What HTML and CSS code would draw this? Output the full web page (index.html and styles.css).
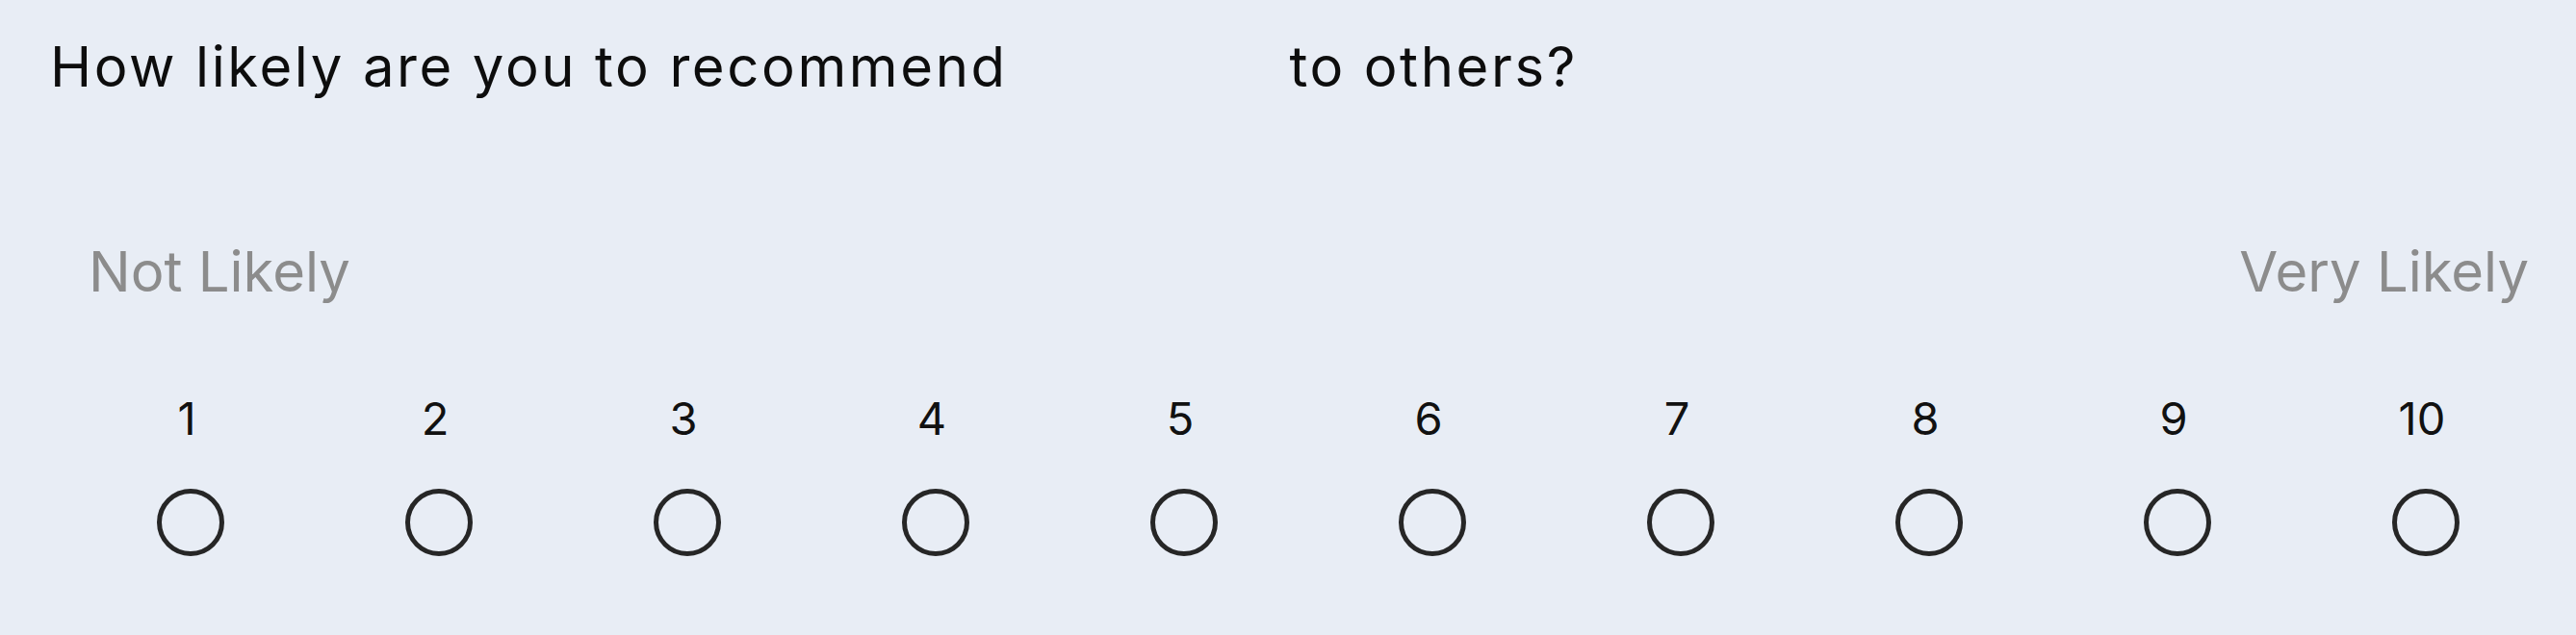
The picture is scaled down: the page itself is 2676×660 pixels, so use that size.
FILE: index.html
```html
<!DOCTYPE html>
<html lang="en">
<head>
<meta charset="utf-8">
<title>Survey</title>
<link rel="stylesheet" href="styles.css">
</head>
<body>
<div class="survey">
  <h1 class="question">How likely are you to recommend <span class="blank"></span> to others?</h1>
  <div class="ends">
    <span class="end">Not Likely</span>
    <span class="end">Very Likely</span>
  </div>
  <div class="scale">
    <label class="opt"><span class="num">1</span><span class="radio"></span></label>
    <label class="opt"><span class="num">2</span><span class="radio"></span></label>
    <label class="opt"><span class="num">3</span><span class="radio"></span></label>
    <label class="opt"><span class="num">4</span><span class="radio"></span></label>
    <label class="opt"><span class="num">5</span><span class="radio"></span></label>
    <label class="opt"><span class="num">6</span><span class="radio"></span></label>
    <label class="opt"><span class="num">7</span><span class="radio"></span></label>
    <label class="opt"><span class="num">8</span><span class="radio"></span></label>
    <label class="opt"><span class="num">9</span><span class="radio"></span></label>
    <label class="opt"><span class="num">10</span><span class="radio"></span></label>
  </div>
</div>
</body>
</html>
```
FILE: styles.css
```css
html, body {
  margin: 0;
  padding: 0;
  background: #e8edf5;
}
body {
  width: 2676px;
  height: 660px;
  overflow: hidden;
  font-family: Inter, "Noto Sans", sans-serif;
}
.survey {
  display: flex;
  flex-direction: column;
  padding: 34px 0 0 0;
}
.question {
  margin: 0 0 0 52px;
  font-size: 58px;
  line-height: 70px;
  font-weight: 400;
  letter-spacing: 2.6px;
  color: #0d0d0d;
  white-space: nowrap;
}
.blank {
  display: inline-block;
  width: 255px;
}
.ends {
  display: flex;
  justify-content: space-between;
  margin-top: 143px;
  padding: 0 49px 0 92px;
}
.end {
  font-size: 58px;
  line-height: 70px;
  color: #8c8c8c;
}
.scale {
  display: grid;
  grid-template-columns: repeat(10, 258px);
  margin-top: 89px;
  padding-left: 69px;
}
.opt {
  display: flex;
  flex-direction: column;
  align-items: center;
}
.num {
  font-size: 47px;
  line-height: 57px;
  color: #111;
  padding-right: 8px;
}
.radio {
  box-sizing: border-box;
  width: 70px;
  height: 70px;
  margin-top: 45px;
  border: 5px solid #262626;
  border-radius: 50%;
}
```
